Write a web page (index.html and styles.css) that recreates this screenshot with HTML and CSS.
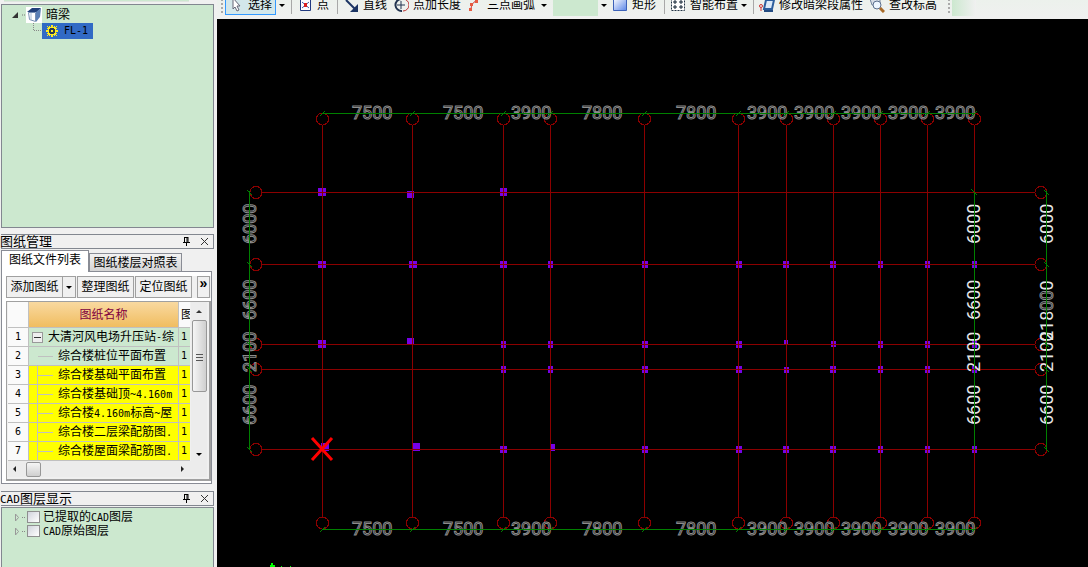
FILE: index.html
```html
<!DOCTYPE html>
<html lang="zh-CN">
<head>
<meta charset="utf-8">
<title>暗梁 FL-1</title>
<link rel="stylesheet" href="styles.css">
</head>
<body>
<div class="app">
  <aside class="side">
    <div class="strip"></div>
    <section class="pane component-tree">
      <div class="tree-root">
        <svg class="expander" width="6" height="6" viewBox="0 0 6 6"><path d="M6 0V6H0Z" fill="#333"/></svg>
        <svg class="lead" width="4" height="2" viewBox="0 0 4 2"><path d="M0 1h1M2 1h1" stroke="#777"/></svg>
        <svg width="16" height="16" viewBox="0 0 16 16"><path fill="#fff" d="M0 0h16v16H0z"/><path fill="#22407a" d="M1 5 6 1h9l-4 4z"/><path fill="#fff" stroke="#7890b4" d="M2.500 5.500h7v9l-6-2z"/><path fill="#5b7fb5" d="M10 5l5-4-1 9-4 5z"/><path stroke="#a6bad4" d="M5 6v7"/></svg>
        <span class="root-name">暗梁</span>
      </div>
      <div class="tree-child">
        <svg class="elbow" width="9" height="16" viewBox="0 0 9 16"><path d="M.5 0v7.500H9" fill="none" stroke="#888" stroke-dasharray="1 1"/></svg>
        <button class="selected-node"><svg width="12" height="12" viewBox="0 0 11 11" shape-rendering="crispEdges"><path d="M5 0h1v2H5zM5 9h1v2H5zM0 5h2v1H0zM9 5h2v1H9zM3 1h1v9H3zM7 1h1v9H7zM1 3h9v1H1zM1 7h9v1H1zM1 1h1v1H1zM9 1h1v1H9zM1 9h1v1H1zM9 9h1v1H9zM2 2h7v7H2z" fill="#ffeb20"/><path fill="#2c3c50" d="M4 3h3v1h1v3H7v1H4V7H3V4h1z"/><path fill="#ffeb20" d="M5 5h1v1H5z"/></svg><span class="latin">FL-1</span></button>
      </div>
    </section>

    <header class="caption"><h2>图纸管理</h2>
      <button aria-label="固定"><svg width="7" height="9" viewBox="0 0 7 9"><path d="M1 .5h4M1.500 0v5M5 0v5M4 0v5M0 5.500h7M3.500 6v3" stroke="#000" fill="none"/></svg></button>
      <button aria-label="关闭"><svg width="9" height="9" viewBox="0 0 9 9"><path d="M1 1l7 7M8 1l-7 7" stroke="#333"/></svg></button>
    </header>
    <div class="tabs"><button class="tab active">图纸文件列表</button><button class="tab">图纸楼层对照表</button></div>
    <section class="page">
      <div class="actions">
        <button class="action">添加图纸</button><button class="action split" aria-label="更多"><i class="down"></i></button><button class="action">整理图纸</button><button class="action">定位图纸</button><button class="action more">»</button>
      </div>
      <div class="list">
        <div class="list-main">
          <table>
            <colgroup><col class="c-num"><col class="c-name"><col class="c-extra"></colgroup>
            <thead><tr><th></th><th class="name-head">图纸名称</th><th class="extra-head">图</th></tr></thead>
            <tbody>
              <tr class="open"><th>1</th><td class="parent"><div class="parent-row"><i class="minus"></i>大清河风电场升压站<span class="latin">-</span>综</div></td><td>1</td></tr>
              <tr class="open"><th>2</th><td class="leaf">综合楼桩位平面布置</td><td>1</td></tr>
              <tr><th>3</th><td class="leaf">综合楼基础平面布置</td><td>1</td></tr>
              <tr><th>4</th><td class="leaf">综合楼基础顶<span class="latin">~4.160m</span></td><td>1</td></tr>
              <tr><th>5</th><td class="leaf">综合楼<span class="latin">4.160m</span>标高<span class="latin">~</span>屋</td><td>1</td></tr>
              <tr><th>6</th><td class="leaf">综合楼二层梁配筋图<span class="latin">.</span></td><td>1</td></tr>
              <tr><th>7</th><td class="leaf">综合楼屋面梁配筋图<span class="latin">.</span></td><td>1</td></tr>
            </tbody>
          </table>
          <div class="vbar"><i class="up"></i><div class="vthumb"><i></i><i></i><i></i></div><i class="down"></i></div>
        </div>
        <div class="hbar"><i class="left"></i><div class="hthumb"></div><i class="right"></i></div>
      </div>
    </section>

    <header class="caption layer-caption"><h2><span class="latin">CAD</span>图层显示</h2>
      <button aria-label="固定"><svg width="7" height="9" viewBox="0 0 7 9"><path d="M1 .5h4M1.500 0v5M5 0v5M4 0v5M0 5.500h7M3.500 6v3" stroke="#000" fill="none"/></svg></button>
      <button aria-label="关闭"><svg width="9" height="9" viewBox="0 0 9 9"><path d="M1 1l7 7M8 1l-7 7" stroke="#333"/></svg></button>
    </header>
    <section class="pane layers">
      <div class="layer"><svg width="12" height="14" viewBox="0 0 12 14"><path d="M1.500 4v7l3-3.500z" fill="none" stroke="#999"/><path d="M8 7.500h1M10 7.500h1" stroke="#888"/></svg><input type="checkbox" id="l1"><label for="l1">已提取的<span class="latin">CAD</span>图层</label></div>
      <div class="layer"><svg width="12" height="14" viewBox="0 0 12 14"><path d="M1.500 4v7l3-3.500z" fill="none" stroke="#999"/><path d="M8 7.500h1M10 7.500h1" stroke="#888"/></svg><input type="checkbox" id="l2"><label for="l2"><span class="latin">CAD</span>原始图层</label></div>
    </section>
  </aside>

  <main class="work">
    <nav class="toolbar">
      <div class="tools">
        <i class="grip"></i>
        <button class="tool current"><svg viewBox="0 0 16 16"><path d="M5 1v11l2-2 2 4 2-1-2-4h3z" fill="#fff" stroke="#667"/></svg>选择</button><button class="drop" aria-label="选择方式"><i class="down"></i></button>
        <i class="sep"></i>
        <button class="tool"><svg viewBox="0 0 16 16"><path d="M3.500 2.500h10v11h-10z" fill="#fff" stroke="#223a80"/><path d="M5 5l7 6M12 5l-7 6" stroke="#4a5fa8"/><path d="M7 6h3v4H7z" fill="#d22"/></svg>点</button>
        <i class="sep"></i>
        <button class="tool"><svg viewBox="0 0 16 16"><path d="M3 3l10 10" fill="none" stroke="#1c3564" stroke-width="2"/><path d="M15 7v8H7z" fill="#1c3564"/></svg>直线</button>
        <button class="tool"><svg viewBox="0 0 16 16"><path d="M9 14A6 6 0 1 1 8 2" fill="none" stroke="#223450" stroke-width="2"/><path d="M10 2a6 6 0 0 1 0 12" fill="none" stroke="#b33" stroke-width="1"/><path d="M4 8h8M8 4v8" stroke="#223450"/></svg>点加长度</button>
        <button class="tool to-drop"><svg viewBox="0 0 16 16"><path d="M4 13q0-7 5-9" fill="none" stroke="#c33"/><path d="M2 11h3v3H2zM3 6h3v3H3zM8 3h3v3H8z" fill="#e65a40"/></svg>三点画弧</button><button class="drop wide" aria-label="画弧方式"><i class="down"></i></button>
        <div class="combo"></div><button class="drop" aria-label="参数"><i class="down"></i></button>
        <button class="tool"><svg viewBox="0 0 16 16"><defs><linearGradient id="blue" x2="1" y2="1"><stop stop-color="#fff"/><stop offset="1" stop-color="#5b86e8"/></linearGradient></defs><path d="M1.500 1.500h13v12h-13z" fill="url(#blue)" stroke="#3d61b8"/></svg>矩形</button>
        <i class="sep"></i>
        <button class="tool to-drop"><svg viewBox="0 0 16 16"><path d="M1.500 1.500h13v12h-13z" fill="#fff" stroke="#234" stroke-dasharray="2 1"/><path d="M3 5h4M5 3v4M9 5h4M11 3v4M3 10h4M5 8v4M9 10h4M11 8v4" stroke="#123"/></svg>智能布置</button><button class="drop" aria-label="布置方式"><i class="down"></i></button>
        <i class="sep"></i>
        <button class="tool"><svg viewBox="0 0 16 16"><path d="M7 3h8l-2 9H5z" fill="#dbe9f8" stroke="#2d5e9e" stroke-width="2"/><path d="M5 14h9" stroke="#234b82" stroke-width="2"/><circle cx="2" cy="9" r="1.500" fill="none" stroke="#c33"/><path d="M2 11v3" stroke="#c33"/></svg>修改暗梁段属性</button>
        <button class="tool"><svg viewBox="0 0 16 16"><path d="M1 2h10v6H3z" fill="#d7dde6" stroke="#7688a0"/><circle cx="8" cy="8" r="4" fill="#eef6ff" stroke="#5b6f8d"/><path d="M11 11l4 4" stroke="#a86a28" stroke-width="3"/></svg>查改标高</button>
        <i class="grip end"></i><i class="fade"></i>
      </div>
    </nav>
    <div class="canvas">
      <svg width="871" height="548" viewBox="217 19 871 548">
        <defs>
          <g id="col" fill="none"><path d="M.5 125v392"/><circle cx=".5" cy="119" r="6"/><circle cx=".5" cy="523" r="6"/></g>
          <g id="row" fill="none"><path d="M262 .5h773"/><circle cx="256" cy=".5" r="6"/><circle cx="1041" cy=".5" r="6"/></g>
          <path id="tick" d="M-2 116l5-5M-2 532l5-5"/>
          <path id="ytick" d="M247-2l5 5M1044-2l5 5"/>
        </defs>
        <path fill="#7700e6" d="M318 188h8v8h-8zM407 191h7v7h-7zM500 188h7v8h-7z
          M318 261h8v7h-8zM409 261h8v7h-8zM500 261h7v7h-7zM548 261h5v7h-5zM642 261h6v7h-6zM736 261h6v7h-6zM783 261h6v7h-6zM830 261h6v7h-6zM878 261h5v7h-5zM925 261h5v7h-5zM972 261h5v7h-5z
          M318 340h8v8h-8zM407 338h7v7h-7zM501 341h5v7h-5zM548 341h5v7h-5zM642 341h6v7h-6zM736 341h6v7h-6zM784 340h4v5h-4zM831 341h5v6h-5zM878 341h5v7h-5zM925 341h5v7h-5zM972 341h5v7h-5z
          M501 366h5v7h-5zM548 366h5v7h-5zM642 366h6v7h-6zM736 366h6v7h-6zM784 367h5v6h-5zM830 366h6v7h-6zM878 366h5v7h-5zM925 366h5v7h-5zM972 366h5v7h-5z
          M321 443h8v8h-8zM412 443h8v8h-8zM500 446h7v7h-7zM550 444h5v7h-5zM642 446h6v7h-6zM736 446h6v7h-6zM783 446h6v7h-6zM830 446h6v7h-6zM878 446h5v7h-5zM925 446h5v7h-5zM972 446h5v7h-5z"/>
        <g stroke="#8b0000" class="axes">
          <use href="#col" x="322"/><use href="#col" x="412"/><use href="#col" x="503"/><use href="#col" x="550"/><use href="#col" x="644"/><use href="#col" x="738"/><use href="#col" x="786"/><use href="#col" x="833"/><use href="#col" x="880"/><use href="#col" x="927"/><use href="#col" x="974"/>
          <use href="#row" y="192"/><use href="#row" y="264"/><use href="#row" y="344"/><use href="#row" y="369"/><use href="#row" y="449"/>
        </g>
        <g class="dim outline">
          <text x="352" y="119">7500</text><text x="443" y="119">7500</text><text x="511" y="119">3900</text><text x="582" y="119">7800</text><text x="676" y="119">7800</text><text x="747" y="119">3900</text><text x="794" y="119">3900</text><text x="841" y="119">3900</text><text x="888" y="119">3900</text><text x="935" y="119">3900</text>
          <text x="352" y="535">7500</text><text x="443" y="535">7500</text><text x="511" y="535">3900</text><text x="582" y="535">7800</text><text x="676" y="535">7800</text><text x="747" y="535">3900</text><text x="794" y="535">3900</text><text x="841" y="535">3900</text><text x="888" y="535">3900</text><text x="935" y="535">3900</text>
          <g transform="rotate(-90)"><text x="-244" y="256">6000</text><text x="-320" y="256">6600</text><text x="-372" y="256">2100</text><text x="-425" y="256">6600</text></g>
        </g>
        <g class="dim" transform="rotate(-90)">
          <text x="-244" y="980">6000</text><text x="-320" y="980">6600</text><text x="-372" y="980">2100</text><text x="-425" y="980">6600</text>
          <text x="-244" y="1053">6000</text><text x="-341" y="1053">218<tspan class="outline">00</tspan>0</text><text x="-372" y="1053">2100</text><text x="-425" y="1053">6600</text>
        </g>
        <g stroke="#008000" fill="none">
          <path d="M322 113.500h653M322 529.500h653M249.500 191v259M974.500 192v258M1046.500 191v259"/>
          <use href="#tick" x="322"/><use href="#tick" x="412"/><use href="#tick" x="503"/><use href="#tick" x="550"/><use href="#tick" x="644"/><use href="#tick" x="738"/><use href="#tick" x="786"/><use href="#tick" x="833"/><use href="#tick" x="880"/><use href="#tick" x="927"/><use href="#tick" x="974"/>
          <use href="#ytick" y="192"/><use href="#ytick" y="264"/><use href="#ytick" y="344"/><use href="#ytick" y="369"/><use href="#ytick" y="449"/>
          <path d="M971 189l6 6"/>
        </g>
        <path d="M312 438l20 22M332 438l-20 22" stroke="#f00" stroke-width="3"/>
        <path d="M271 563h2v2h2v2h-5v-2h1zM281 566h1v1h-1zM290 566h1v1h-1z" fill="#0f0"/>
      </svg>
    </div>
  </main>
</div>
</body>
</html>
```
FILE: styles.css
```css
* { box-sizing: border-box; }
body { margin: 0; background: #f0f0f0; color: #000; font: 12px/14px "Liberation Sans", "Noto Sans CJK SC", sans-serif; }
button { font: inherit; color: inherit; margin: 0; padding: 0; border: 0; background: none; white-space: nowrap; }
svg { flex: none; display: block; }
.app { display: flex; height: 100vh; overflow: hidden; }
.latin { font-family: "DejaVu Sans Mono", monospace; font-size: 10px; }

.side { width: 217px; flex: none; display: flex; flex-direction: column; padding: 0 3px 0 1px; }
.strip { flex: none; height: 2px; margin: 0 25px 2px 3px; background: #cce8cf; border-bottom: 1px solid #dfe4df; }
.pane { background: #cce8cf; border: 1px solid #828790; }
.component-tree { flex: none; height: 224px; padding: 1px 0 0 10px; }
.tree-root { display: flex; align-items: center; height: 17px; gap: 4px; }
.tree-root .lead { margin-right: -4px; }
.tree-child { display: flex; padding-left: 21px; }
.selected-node { display: flex; align-items: center; width: 51px; height: 16px; padding-left: 4px; gap: 6px; background: #316ac5; }

.caption { flex: none; display: flex; align-items: center; height: 15px; margin-top: 6px; border: 1px solid #828790; border-left: 0; padding-right: 4px; gap: 10px; }
.caption h2 { flex: 1; margin: 0 0 0 -1px; font-size: 13px; font-weight: 400; line-height: 13px; white-space: nowrap; }
.caption .latin { font-size: 11px; }
.tabs { flex: none; display: flex; align-items: flex-end; height: 21px; margin-top: 1px; }
.tab { height: 18px; width: 93px; border: 1px solid #898c95; border-bottom: 0; background: linear-gradient(#f2f2f2, #d4d4d4); }
.tab.active { position: relative; height: 22px; width: 88px; margin-bottom: -1px; padding-bottom: 3px; background: #fff; }
.page { flex: none; margin-right: 2px; background: #fff; border: 1px solid #898c95; padding: 4px 0 2px 4px; }
.actions { display: flex; height: 22px; margin-bottom: 3px; background: #f0f0f0; }
.action { width: 57px; border: 1px solid #a0a0a0; background: #f0f0f0; margin-right: 1px; }
.action:first-child { margin-right: 0; }
.action.split { width: 13px; border-left: 0; display: flex; align-items: center; justify-content: center; }
.action.more { width: 13px; margin-left: auto; margin-right: 1px; font: bold 14px/10px "Liberation Sans", sans-serif; padding-bottom: 8px; }
.down, .up { width: 0; border: 3px solid transparent; border-top-color: #000; border-bottom-width: 0; }
.up { border-top-width: 0; border-bottom: 3px solid #333; }
.left, .right { height: 0; border: 3px solid transparent; border-right: 3px solid #222; border-left-width: 0; }
.right { border-right-width: 0; border-left: 3px solid #222; }

.list { border: 2px solid #a0a0a0; border-top-width: 1px; border-left-width: 1px; background: #f0f0f0; padding: 0 2px 2px 1px; }
.list-main { display: flex; }
table { flex: 1; min-width: 0; border-collapse: separate; border-spacing: 0; table-layout: fixed; width: 0; }
.c-num { width: 21px; } .c-extra { width: 11px; }
th, td { padding: 0; height: 19px; font-weight: 400; overflow: hidden; white-space: nowrap; text-align: left; border-right: 1px solid #c0c0c0; border-bottom: 1px solid #c0c0c0; line-height: 16px; }
tbody td { background: #ff0; }
tbody .open td { background: #cce8cf; }
tbody th { text-align: center; background: #fafafa; font: 10px/16px "DejaVu Sans Mono", monospace; }
tbody td:last-child { font: 10px/16px "DejaVu Sans Mono", monospace; padding-left: 2px; border-right: 0; }
thead th { height: 26px; background: #fafafa; }
thead .name-head { text-align: center; color: #800040; background: linear-gradient(#f9d9a0, #f0bd60); }
thead .extra-head { padding-left: 2px; border-right: 0; }
.parent { padding-left: 3px; }
.parent-row { display: flex; align-items: center; height: 16px; }
.minus { flex: none; width: 11px; height: 11px; margin-right: 5px; border: 1px solid #999; background: linear-gradient(#333, #333) center / 7px 1px no-repeat #eee; }
.leaf { padding-left: 29px; background: linear-gradient(#c0c0c0, #c0c0c0) 9px 9px / 15px 1px no-repeat, linear-gradient(#c0c0c0, #c0c0c0) 8px 0 / 1px 19px no-repeat, #ff0; }
tbody .open .leaf { background: linear-gradient(#c0c0c0, #c0c0c0) 9px 9px / 15px 1px no-repeat, #cce8cf; }
.vbar { width: 16px; margin-left: 1px; flex: none; display: flex; flex-direction: column; align-items: center; padding: 8px 0 5px; background: #ececec; }
.vthumb { width: 15px; height: 72px; margin: 7px 0 auto; padding-top: 33px; border: 1px solid #979797; border-radius: 2px; background: linear-gradient(90deg, #f5f5f5, #cfcfcf); }
.vthumb i { display: block; height: 1px; margin: 0 3px 2px; background: #555; }
.hbar { display: flex; align-items: center; height: 16px; padding: 0 23px 0 5px; background: #ececec; }
.hthumb { width: 15px; height: 15px; margin: 0 auto 0 10px; border: 1px solid #979797; border-radius: 2px; background: linear-gradient(#f5f5f5, #cfcfcf); }

.layer-caption { margin-top: 7px; }
.layers { flex: 1; margin-top: 1px; border-bottom: 0; padding: 2px 0 0 12px; }
.layer { display: flex; align-items: center; height: 14px; white-space: nowrap; }
.layer input { appearance: none; flex: none; width: 13px; height: 12px; margin: 0 3px 0 1px; border: 1px solid #8e8f8f; background: linear-gradient(135deg, #d0d4dc, #fff); }

.work { flex: 1; min-width: 0; display: flex; flex-direction: column; }
.toolbar { flex: none; height: 19px; overflow: hidden; background: linear-gradient(#ecf1ec, #f0f0f0); }
.tools { display: flex; align-items: center; height: 20px; margin-top: -5px; }
.tool { display: flex; align-items: center; gap: 4px; height: 20px; padding: 0 3px; flex: none; }
.tool svg { width: 16px; height: 16px; }
.tool.to-drop { padding-right: 0; }
.tool.current { width: 51px; padding: 0 2px; border: 1px solid #3399ff; background: #d3e7ea; }
.drop { flex: none; display: flex; justify-content: center; width: 11px; }
.drop.wide { width: 18px; }
.sep { flex: none; width: 1px; height: 18px; margin: 0 2px 0 4px; background: #a8a8a8; }
.tool + .sep { margin-left: 5px; }
.grip { flex: none; width: 2px; height: 20px; margin: 0 2px 0 4px; background: repeating-linear-gradient(#aaa 0 2px, transparent 2px 4px); }
.grip.end { margin-left: 8px; }
.combo { flex: none; width: 45px; height: 22px; background: #cce8cf; }
.fade { width: 24px; height: 22px; background: linear-gradient(90deg, #cce8cf, #f0f0f0); }

.canvas { flex: 1; min-height: 0; overflow: hidden; background: #000; }
.axes { shape-rendering: crispEdges; }
.dim { font: 18px Roboto, "Liberation Sans", sans-serif; fill: #e6e6e6; }
.outline { fill: #000; stroke: #8c8c8c; }
```
